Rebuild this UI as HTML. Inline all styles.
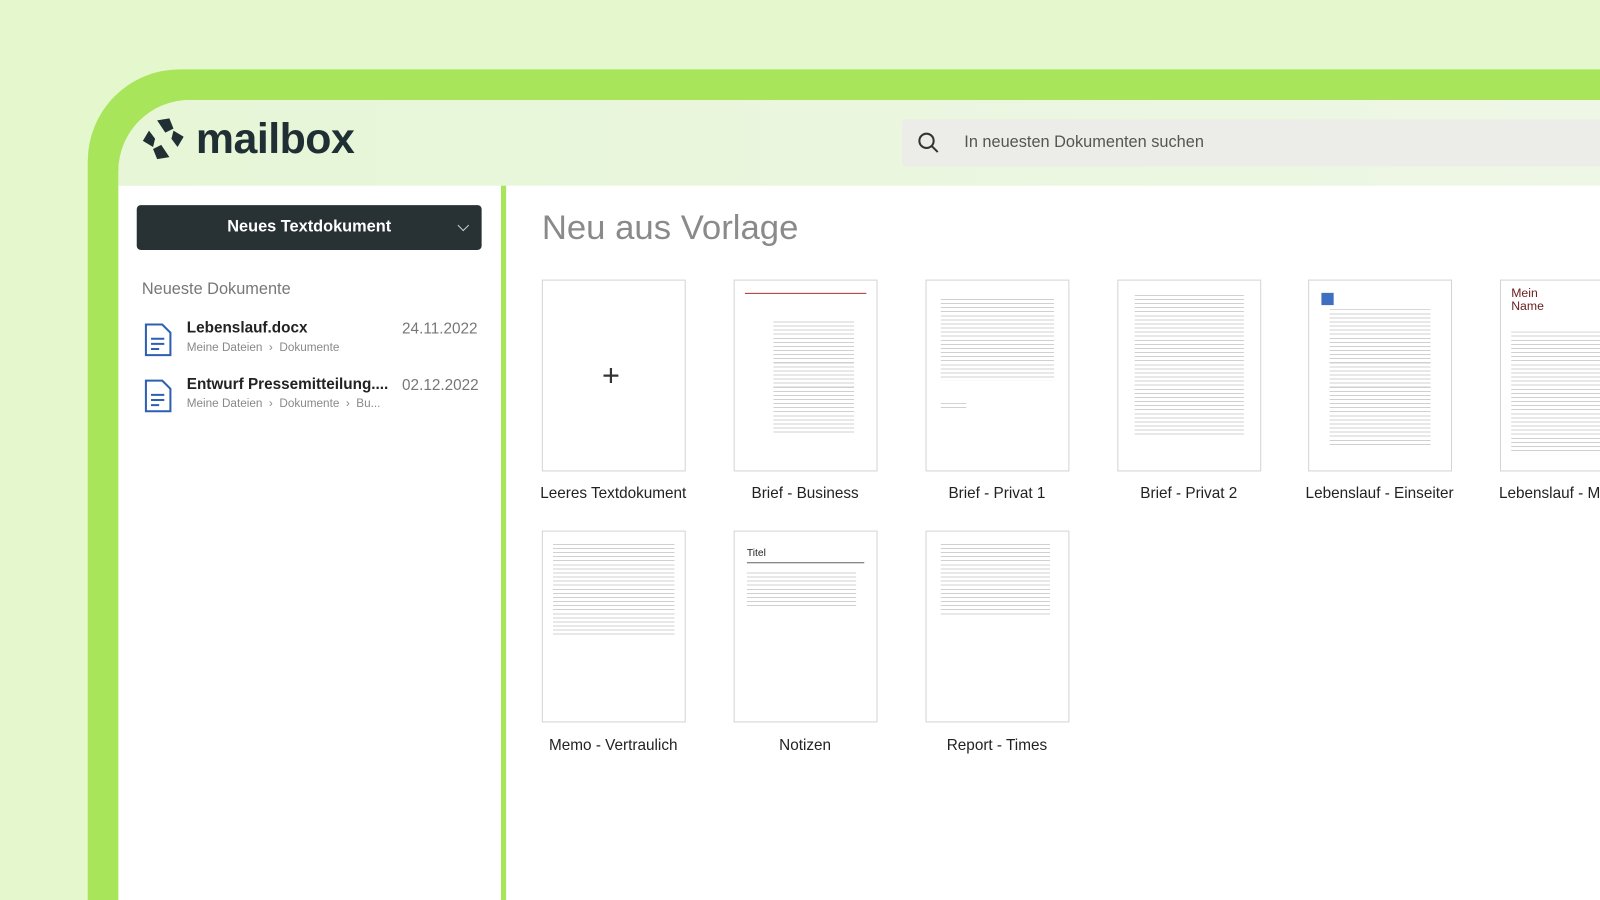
<!DOCTYPE html>
<html><head><meta charset="utf-8"><style>
*{margin:0;padding:0;box-sizing:border-box}
html,body{width:1600px;height:900px;overflow:hidden}
body{background:#e4f7cd;font-family:"Liberation Sans",sans-serif;position:relative}
#w{position:absolute;left:0;top:0;width:1568px;height:882px;transform:scale(1.0204);transform-origin:0 0;overflow:hidden}
.frame{position:absolute;left:86px;top:68px;width:1514px;height:832px;background:#a8e55a;border-top-left-radius:90px}
.panel{position:absolute;left:116px;top:98px;width:1484px;height:802px;background:#fff;border-top-left-radius:70px;overflow:hidden}
.hdr{position:absolute;left:0;top:0;width:100%;height:84px;background:linear-gradient(90deg,#e6f6d6,#eef7e6)}
.logo{position:absolute;left:22px;top:14px;display:flex;align-items:center}
.logo span{font-size:42px;font-weight:bold;color:#1f2f33;margin-left:10px;letter-spacing:-0.5px}
.search{position:absolute;left:768px;top:19px;width:900px;height:46px;background:#ecece8;border-radius:4px}
.search span{position:absolute;left:61px;top:14px;font-size:16px;color:#555}
.div{position:absolute;left:375px;top:84px;width:5px;height:720px;background:#a8e55a}
.btn{position:absolute;left:18px;top:103px;width:338px;height:44px;background:#283234;border-radius:4px;color:#fff;font-size:16px;font-weight:bold;text-align:center;line-height:44px}
.btn i{position:absolute;right:14px;top:16px;width:8px;height:8px;border-right:1.5px solid #ccc;border-bottom:1.5px solid #ccc;transform:rotate(45deg)}
.h{position:absolute;left:23px;top:177px;font-size:16px;color:#777}
.doc{position:absolute;left:25px}
.doc svg{position:absolute;left:0;top:0}
.doc .n{position:absolute;left:42px;top:-3px;font-size:15px;font-weight:bold;color:#222;white-space:nowrap}
.doc .p{position:absolute;left:42px;top:19px;font-size:11.5px;color:#888;white-space:nowrap}
.doc .d{position:absolute;left:253px;top:-2px;font-size:15px;color:#777}
.title{position:absolute;left:415px;top:106px;font-size:34px;color:#8a8a8a}
.card{position:absolute;width:141px;height:188px;border:1.5px solid #d4d4d4;background:#fff;overflow:hidden}
.card .ln{position:absolute;left:22px;right:22px;background:repeating-linear-gradient(180deg,#aaa 0 1px,transparent 1px 4px);opacity:.55}
.lab{position:absolute;width:200px;text-align:center;font-size:15px;color:#222}
</style></head><body><div id="w">
<div class="frame"></div>
<div class="panel">
<div class="hdr">
<div class="logo"><svg width="44" height="44" viewBox="0 0 44 44"><g fill="#1f2f33"><path d="M16 4l12-2 4 10-8 4z"/><path d="M32 14l10 6-6 10-6-8z"/><path d="M28 40l-12 2-4-10 8-4z"/><path d="M12 30L2 24l6-10 6 8z"/></g></svg><span>mailbox</span></div>
<div class="search"><svg style="position:absolute;left:14px;top:11px" width="24" height="24" viewBox="0 0 24 24"><circle cx="10" cy="10" r="7" fill="none" stroke="#333" stroke-width="2"/><path d="M15 15l6 6" stroke="#333" stroke-width="2"/></svg><span>In neuesten Dokumenten suchen</span></div>
</div>
<div class="div"></div>
<div class="btn">Neues Textdokument<i></i></div>
<div class="h">Neueste Dokumente</div>
<div class="doc" style="top:218px"><svg width="28" height="34" viewBox="0 0 28 34"><path d="M2 2h16l8 8v22H2z" fill="none" stroke="#2d5fb3" stroke-width="2"/><path d="M7 16h13M7 21h13M7 26h8" stroke="#2d5fb3" stroke-width="2"/></svg><div class="n">Lebenslauf.docx</div><div class="p">Meine Dateien &nbsp;›&nbsp; Dokumente</div><div class="d">24.11.2022</div></div>
<div class="doc" style="top:273px"><svg width="28" height="34" viewBox="0 0 28 34"><path d="M2 2h16l8 8v22H2z" fill="none" stroke="#2d5fb3" stroke-width="2"/><path d="M7 16h13M7 21h13M7 26h8" stroke="#2d5fb3" stroke-width="2"/></svg><div class="n">Entwurf Pressemitteilung....</div><div class="p">Meine Dateien &nbsp;›&nbsp; Dokumente &nbsp;›&nbsp; Bu...</div><div class="d">02.12.2022</div></div>
<div class="title">Neu aus Vorlage</div>
</div>
<div class="card" style="left:531px;top:274px"><div style="position:absolute;left:58px;top:82px;font-size:30px;color:#333;line-height:24px">+</div></div>
<div class="card" style="left:719px;top:274px"><div style="position:absolute;left:10px;right:10px;top:12px;height:1px;background:#a33"></div><div class="ln" style="top:40px;height:110px;left:38px"></div></div>
<div class="card" style="left:907px;top:274px"><div class="ln" style="top:18px;height:80px;left:14px;right:14px"></div><div class="ln" style="top:120px;height:6px;left:14px;right:100px"></div></div>
<div class="card" style="left:1095px;top:274px"><div class="ln" style="top:14px;height:140px;left:16px;right:16px"></div></div>
<div class="card" style="left:1282px;top:274px"><div style="position:absolute;left:12px;top:12px;width:12px;height:12px;background:#3e6fc0"></div><div class="ln" style="top:28px;height:135px;left:20px;right:20px"></div></div>
<div class="card" style="left:1470px;top:274px"><div style="position:absolute;left:10px;top:6px;font-size:12px;color:#6a2020;line-height:13px">Mein<br>Name</div><div class="ln" style="top:50px;height:120px;left:10px;right:-20px"></div></div>
<div class="card" style="left:531px;top:520px"><div class="ln" style="top:12px;height:90px;left:10px;right:10px"></div></div>
<div class="card" style="left:719px;top:520px"><div style="position:absolute;left:12px;top:16px;font-size:10px;color:#222">Titel</div><div style="position:absolute;left:12px;right:12px;top:30px;height:1px;background:#666"></div><div class="ln" style="top:40px;height:34px;left:12px;right:20px"></div></div>
<div class="card" style="left:907px;top:520px"><div class="ln" style="top:12px;height:72px;left:14px;right:18px"></div></div>
<div class="lab" style="left:501px;top:475px">Leeres Textdokument</div>
<div class="lab" style="left:689px;top:475px">Brief - Business</div>
<div class="lab" style="left:877px;top:475px">Brief - Privat 1</div>
<div class="lab" style="left:1065px;top:475px">Brief - Privat 2</div>
<div class="lab" style="left:1252px;top:475px">Lebenslauf - Einseiter</div>
<div class="lab" style="left:1469px;top:475px;text-align:left;white-space:nowrap">Lebenslauf - Mehrseiter</div>
<div class="lab" style="left:501px;top:722px">Memo - Vertraulich</div>
<div class="lab" style="left:689px;top:722px">Notizen</div>
<div class="lab" style="left:877px;top:722px">Report - Times</div>
</div></body></html>
